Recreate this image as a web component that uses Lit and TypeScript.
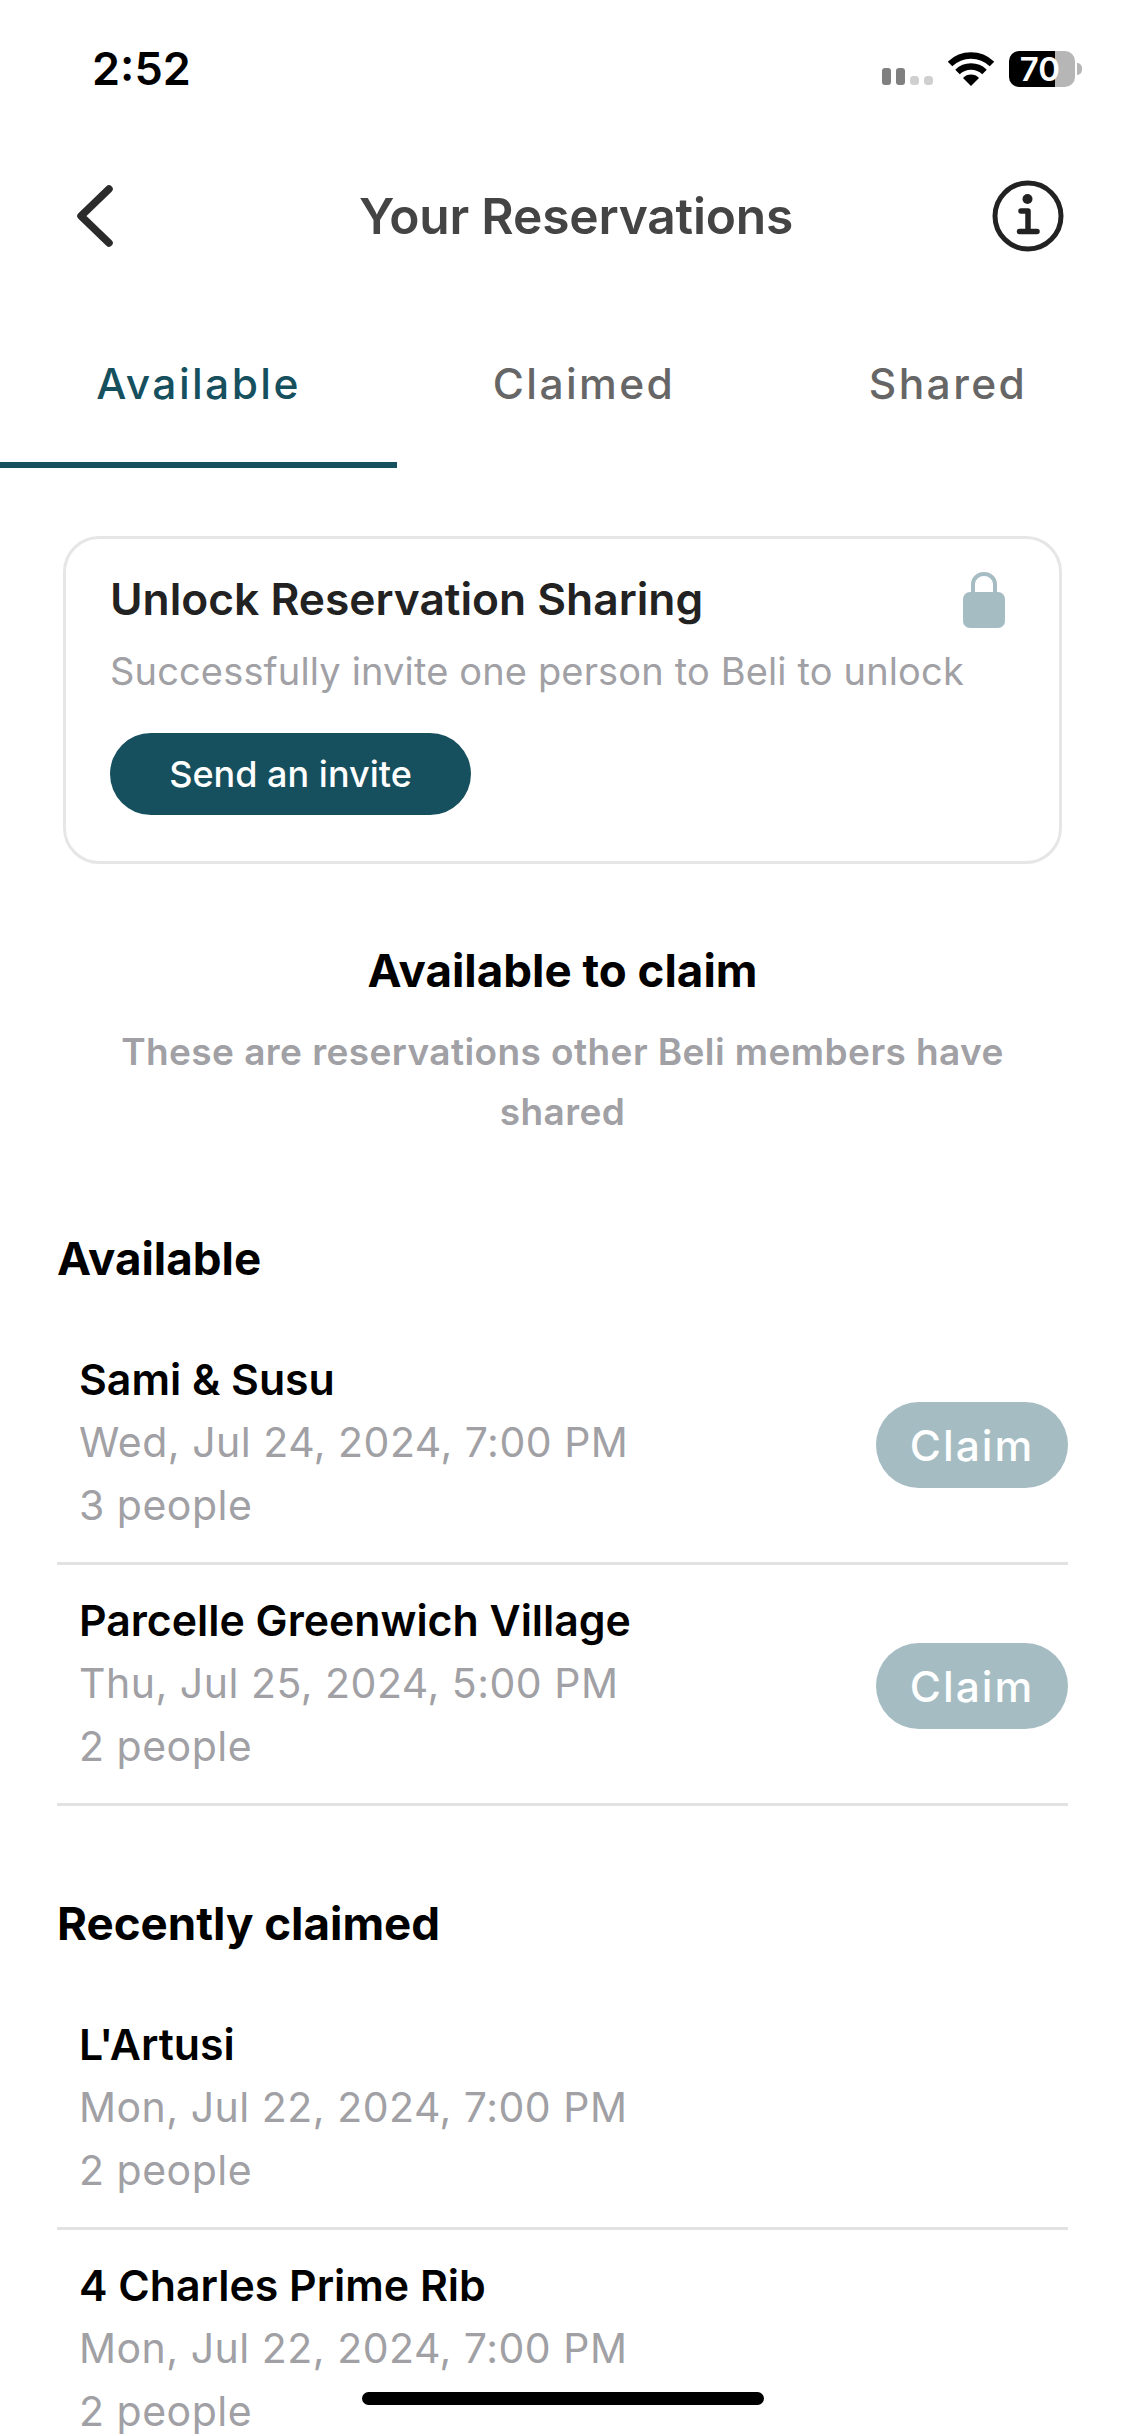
import { LitElement, html, css } from "lit";
import { customElement } from "lit/decorators.js";

const available = [
  { name: "Sami & Susu", date: "Wed, Jul 24, 2024, 7:00 PM", people: "3 people" },
  { name: "Parcelle Greenwich Village", date: "Thu, Jul 25, 2024, 5:00 PM", people: "2 people" },
];
const claimed = [
  { name: "L'Artusi", date: "Mon, Jul 22, 2024, 7:00 PM", people: "2 people" },
  { name: "4 Charles Prime Rib", date: "Mon, Jul 22, 2024, 7:00 PM", people: "2 people" },
];

@customElement("app-root")
export class AppRoot extends LitElement {
  static styles = css`
    :host {
      display: block;
      position: relative;
      width: 1125px;
      height: 2436px;
      overflow: hidden;
      background: #fff;
      font-family: Inter, "Liberation Sans", sans-serif;
      color: #000;
    }
    .status {
      height: 136px;
      box-sizing: border-box;
      padding: 45px 43px 0 92px;
      display: flex;
      justify-content: space-between;
      align-items: flex-start;
    }
    .time {
      font-size: 45px;
      line-height: 48px;
      font-weight: 600;
    }
    .status-icons {
      display: flex;
      align-items: flex-start;
      margin-top: 6px;
    }
    .signal { margin: 17px 13px 0 0; }
    .wifi { margin: 1px 15px 0 0; }
    .header {
      height: 160px;
      display: flex;
      align-items: center;
      justify-content: space-between;
      padding: 0 61px 0 76px;
    }
    .title {
      font-size: 49.7px;
      font-weight: 600;
      color: #444;
      letter-spacing: -0.2px;
      margin-left: 46px;
      white-space: nowrap;
    }
    .tabs {
      height: 172px;
      display: flex;
    }
    .tab {
      flex: none;
      font-size: 42.5px;
      line-height: 50px;
      font-weight: 500;
      letter-spacing: 2.4px;
      color: #666;
      padding-top: 63px;
      box-sizing: border-box;
      text-align: center;
    }
    .tab.a { width: 397px; color: #16505e; border-bottom: 6px solid #16505e; height: 172px; }
    .tab.b { width: 374px; }
    .tab.c { width: 354px; }
    .card {
      margin: 68px 63px 0 63px;
      height: 328px;
      box-sizing: border-box;
      border: 3px solid #e6e6e6;
      border-radius: 36px;
      padding: 32px 44px;
      position: relative;
    }
    .card-title {
      font-size: 44.3px;
      line-height: 56px;
      font-weight: 600;
      color: #222;
      white-space: nowrap;
    }
    .card-sub {
      font-size: 38px;
      line-height: 56px;
      margin-top: 16px;
      color: #a0a0a5;
      letter-spacing: 0.15px;
      white-space: nowrap;
    }
    .lock {
      position: absolute;
      top: 33px;
      right: 54px;
    }
    .send {
      margin-top: 34px;
      width: 361px;
      height: 82px;
      border-radius: 41px;
      background: #16505e;
      color: #fff;
      font-size: 36px;
      font-weight: 500;
      display: flex;
      align-items: center;
      justify-content: center;
    }
    .intro {
      text-align: center;
      margin-top: 77px;
    }
    .intro h2 {
      margin: 0;
      font-size: 45.7px;
      line-height: 60px;
      font-weight: 700;
    }
    .intro p {
      margin: 21px auto 0;
      width: 940px;
      font-size: 37px;
      line-height: 60px;
      font-weight: 600;
      color: #a0a0a5;
      letter-spacing: 0.42px;
    }
    .section {
      margin: 0 57px;
    }
    .section h3 {
      margin: 0;
      font-size: 45.7px;
      line-height: 60px;
      font-weight: 700;
    }
    .section.one { margin-top: 87px; }
    .section.two { margin-top: 88px; }
    .rows { margin-top: 35px; }
    .row {
      height: 241px;
      box-sizing: border-box;
      border-bottom: 3px solid #e2e2e2;
      padding: 24px 0 0 22px;
      display: flex;
      justify-content: space-between;
    }
    .rname {
      font-size: 42.8px;
      line-height: 63px;
      font-weight: 600;
      color: #000;
    }
    .rline {
      font-size: 41px;
      line-height: 63px;
      color: #a0a0a5;
      letter-spacing: 0.5px;
    }
    .claim {
      width: 192px;
      height: 86px;
      border-radius: 43px;
      background: #a5bcc3;
      color: #fff;
      font-size: 42.5px;
      font-weight: 500;
      letter-spacing: 2px;
      display: flex;
      align-items: center;
      justify-content: center;
      margin-top: 54px;
    }
    .home {
      position: absolute;
      left: 362px;
      top: 2392px;
      width: 402px;
      height: 13px;
      border-radius: 7px;
      background: #000;
    }
    .batt {
      width: 66px;
      height: 36px;
      border-radius: 10px;
      background: linear-gradient(90deg, #000 0 46px, #b6b6b6 46px);
      color: #fff;
      font-size: 33px;
      line-height: 36px;
      font-weight: 600;
      text-align: center;
      padding-right: 4px;
      box-sizing: border-box;
    }
    .batt-cap {
      width: 5px;
      height: 12px;
      background: #b6b6b6;
      border-radius: 0 5px 5px 0;
      margin: 12px 0 0 2px;
    }
  `;

  private renderRow(r: { name: string; date: string; people: string }, claim: boolean) {
    return html`<div class="row">
      <div>
        <div class="rname">${r.name}</div>
        <div class="rline">${r.date}</div>
        <div class="rline">${r.people}</div>
      </div>
      ${claim ? html`<div class="claim">Claim</div>` : ""}
    </div>`;
  }

  render() {
    return html`
      <div class="status">
        <div class="time">2:52</div>
        <div class="status-icons">
          <svg class="signal" width="54" height="18" viewBox="0 0 54 18">
            <rect x="1" y="0" width="9" height="17" rx="3" fill="#808080"/>
            <rect x="15" y="0" width="9" height="17" rx="3" fill="#808080"/>
            <rect x="29" y="8" width="9" height="9" rx="3.5" fill="#cfcfcf"/>
            <rect x="43" y="8" width="9" height="9" rx="3.5" fill="#cfcfcf"/>
          </svg>
          <svg class="wifi" width="46" height="34" viewBox="0 0 46 34">
            <path d="M2 12 A30 30 0 0 1 44 12" fill="none" stroke="#000" stroke-width="6.5"/>
            <path d="M9.5 20 A19.5 19.5 0 0 1 36.5 20" fill="none" stroke="#000" stroke-width="6.5"/>
            <path d="M15 26 A11 11 0 0 1 31 26 L23 34 Z" fill="#000"/>
          </svg>
          <div class="batt">70</div>
          <div class="batt-cap"></div>
        </div>
      </div>
      <div class="header">
        <svg width="38" height="64" viewBox="0 0 38 64">
          <path d="M33 5 L5 32 L33 59" fill="none" stroke="#2b2b2b" stroke-width="7.5" stroke-linecap="round" stroke-linejoin="round"/>
        </svg>
        <div class="title">Your Reservations</div>
        <svg width="72" height="72" viewBox="0 0 72 72">
          <circle cx="36" cy="36" r="33" fill="none" stroke="#222" stroke-width="5"/>
          <circle cx="35.5" cy="19" r="5" fill="#222"/>
          <path d="M29 31 H36 V51 M27.5 51.5 H45" fill="none" stroke="#222" stroke-width="5.5" stroke-linecap="round" stroke-linejoin="round"/>
        </svg>
      </div>
      <div class="tabs">
        <div class="tab a">Available</div>
        <div class="tab b">Claimed</div>
        <div class="tab c">Shared</div>
      </div>
      <div class="card">
        <div class="card-title">Unlock Reservation Sharing</div>
        <div class="card-sub">Successfully invite one person to Beli to unlock</div>
        <div class="send">Send an invite</div>
        <svg class="lock" width="42" height="56" viewBox="0 0 42 56">
          <path d="M10 24 V12 A11 10 0 0 1 32 12 V24" fill="none" stroke="#a5bcc3" stroke-width="4"/>
          <rect x="0" y="20" width="42" height="36" rx="7" fill="#a5bcc3"/>
        </svg>
      </div>
      <div class="intro">
        <h2>Available to claim</h2>
        <p>These are reservations other Beli members have shared</p>
      </div>
      <div class="section one">
        <h3>Available</h3>
        <div class="rows">${available.map((r) => this.renderRow(r, true))}</div>
      </div>
      <div class="section two">
        <h3>Recently claimed</h3>
        <div class="rows">${claimed.map((r) => this.renderRow(r, false))}</div>
      </div>
      <div class="home"></div>
    `;
  }
}
